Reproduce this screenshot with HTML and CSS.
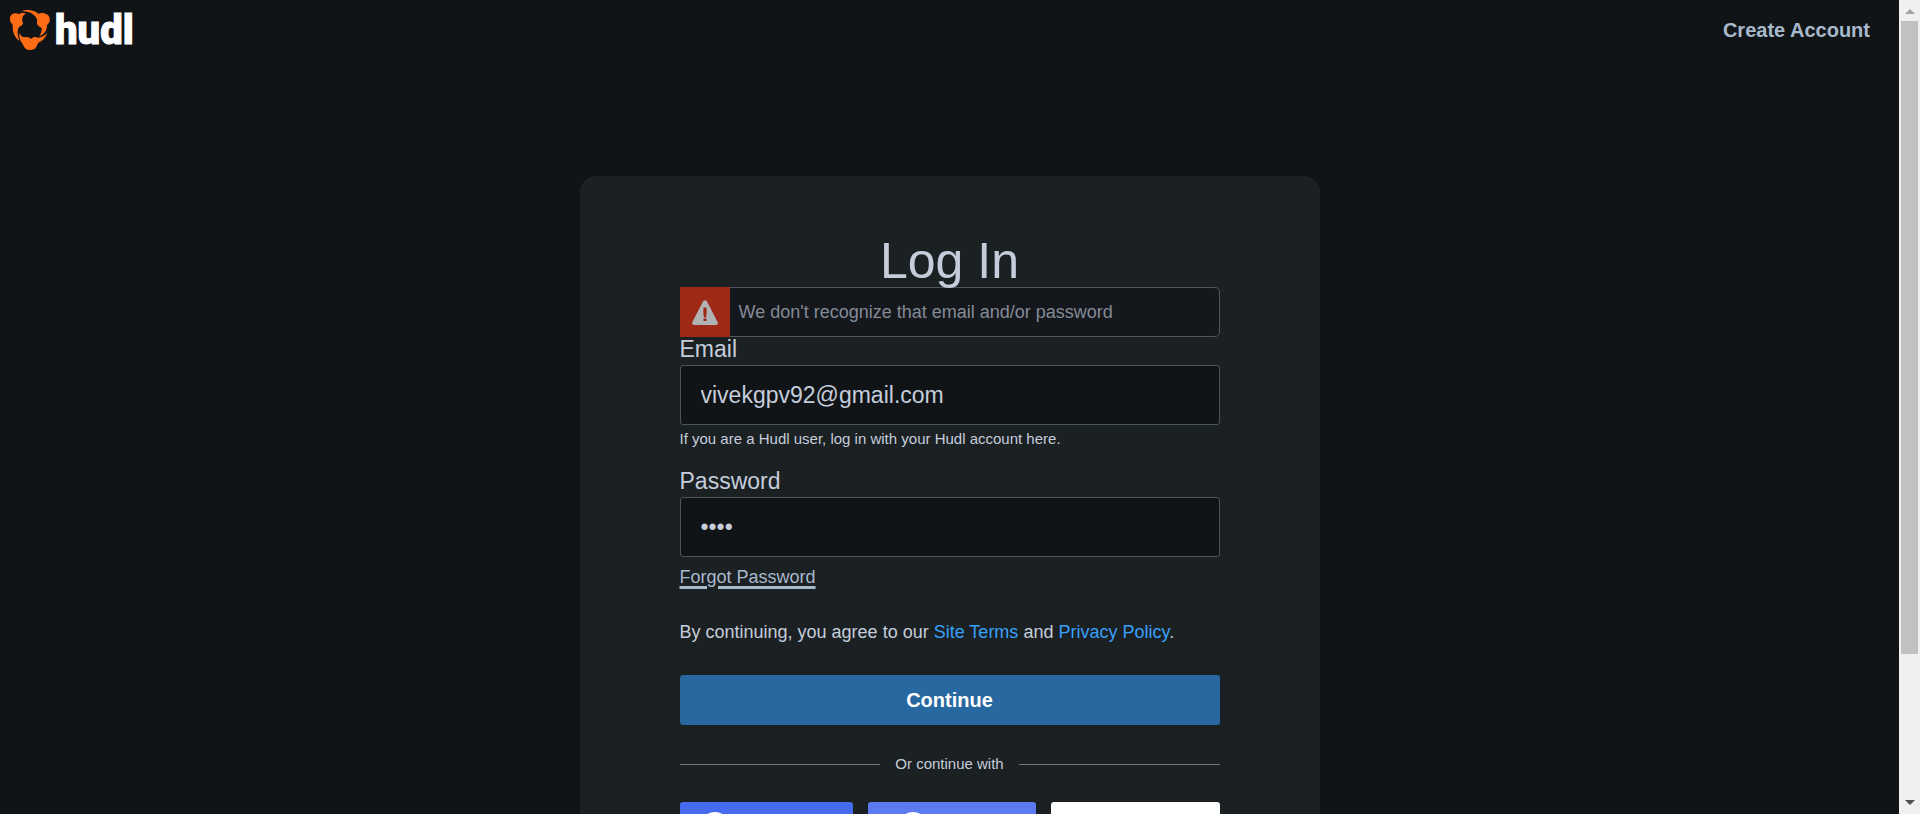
FILE: index.html
```html
<!DOCTYPE html>
<html lang="en">
<head>
<meta charset="utf-8">
<meta name="viewport" content="width=device-width, initial-scale=1">
<title>Log In - Hudl</title>
<link rel="stylesheet" href="styles.css">
</head>
<body>
<div class="page">
  <header class="topbar">
    <a class="logo" href="#" aria-label="hudl">
      <svg class="logo-mark" viewBox="9 9 126 126" aria-hidden="true">
        <path d="M60 23C50 19 44 23 38 24C28 19 12 23 12 38C11 48 17 51 20 56C19 76 25 94 40 104C35 90 33 78 37 66C42 58 51 60 51 50C46 39 49 28 60 23Z"/>
        <path d="M46 16C62 9 84 11 97 23C112 17 130 24 131 38C133 49 126 52 123 58C123 74 114 86 100 91C105 82 108 74 107 66C96 60 90 54 94 45C92 28 72 15 46 16Z"/>
        <path d="M40 80C44 89 50 94 56 94C66 90 72 98 77 98C84 91 90 93 96 95C107 94 116 89 124 80C119 96 108 105 97 110C92 117 92 132 72 132C57 132 54 122 50 114C42 104 38 92 40 80Z"/>
      </svg>
      <span class="wordmark">hudl</span>
    </a>
    <a class="create" href="#">Create Account</a>
  </header>
  <main class="card">
    <h1 class="title">Log In</h1>
    <div class="alert" role="alert">
      <span class="alert-icon">
        <svg width="26" height="25" viewBox="0 0 26 25" aria-hidden="true">
          <path class="alert-shape" d="M11 1.4Q13-1 15 1.4L25.6 22Q26.4 25 24 25H2Q-.4 25 .4 22Z"/>
          <path class="alert-mark" d="M11.4 7.5h3.2v6l-.5 4h-2.2l-.5-4zM11.5 18.6h3V21h-3z"/>
        </svg>
      </span>
      <span class="alert-text">We don't recognize that email and/or password</span>
    </div>
    <form class="form">
      <label class="label" for="email">Email</label>
      <input class="field" id="email" type="email" value="vivekgpv92@gmail.com">
      <p class="hint">If you are a Hudl user, log in with your Hudl account here.</p>
      <label class="label" for="password">Password</label>
      <input class="field" id="password" type="password" value="abcd">
      <a class="forgot" href="#">Forgot Password</a>
      <p class="terms">By continuing, you agree to our <a href="#">Site Terms</a> and <a href="#">Privacy Policy</a>.</p>
      <button class="continue" type="submit">Continue</button>
      <div class="divider">Or continue with</div>
      <div class="social">
        <button class="provider provider-a" type="button" aria-label="Facebook"><span class="disc"></span></button>
        <button class="provider provider-b" type="button" aria-label="Google"><span class="disc"></span></button>
        <button class="provider provider-c" type="button" aria-label="Apple"></button>
      </div>
    </form>
  </main>
</div>
<div class="scrollbar" aria-hidden="true">
  <svg class="arrow arrow-up" viewBox="0 0 10 5"><path d="M0 5L5 0L10 5Z"/></svg>
  <div class="track"><div class="thumb"></div></div>
  <svg class="arrow arrow-down" viewBox="0 0 10 5"><path d="M0 0L5 5L10 0Z"/></svg>
</div>
</body>
</html>
```
FILE: styles.css
```css
* { box-sizing: border-box; }
body {
  margin: 0;
  height: 100vh;
  display: flex;
  overflow: hidden;
  background: #101417;
  color: #c5cddb;
  font-family: "Liberation Sans", Arial, sans-serif;
}
.page { flex: 1; min-width: 0; overflow: hidden; }
.topbar {
  display: flex;
  align-items: center;
  justify-content: space-between;
  height: 60px;
  padding: 0 29px 0 9px;
}
.logo { display: flex; align-items: center; gap: 4px; text-decoration: none; }
.logo-mark { width: 42px; height: 42px; fill: #ff6c16; }
.wordmark {
  padding-top: 2px;
  color: #fff;
  font: 900 40px/42px Roboto, sans-serif;
  -webkit-text-stroke: 1px #fff;
}
.create { color: #a9b9cc; font-size: 20px; font-weight: bold; text-decoration: none; }
.card {
  max-width: 740px;
  margin: 116px auto 60px;
  padding: 60px 100px;
  border-radius: 16px;
  background: #1b2023;
}
.title {
  position: relative;
  z-index: 1;
  margin: 0;
  font-size: 50px;
  line-height: 51px;
  font-weight: normal;
  text-align: center;
}
.alert {
  display: flex;
  align-items: center;
  height: 50px;
  border: 1px solid #50565b;
  border-left: 0;
  border-radius: 5px;
  background: #14171c;
}
.alert-icon {
  flex: none;
  display: flex;
  align-items: center;
  justify-content: center;
  width: 50px;
  height: 50px;
  background: #9e2916;
}
.alert-shape { fill: #b1b4b5; }
.alert-mark { fill: #9e2916; }
.alert-text { padding-left: 9px; color: #858b96; font-size: 18px; }
.form { display: flex; flex-direction: column; }
.label { font-size: 23px; line-height: 24px; margin-bottom: 4px; }
.field {
  width: 100%;
  height: 60px;
  padding: 0 20px;
  border: 1px solid #4b535e;
  border-radius: 3px;
  background: #111417;
  color: #c5cddb;
  font: 23px "Liberation Sans", Arial, sans-serif;
}
.hint { margin: 4px 0 20px; font-size: 15px; line-height: 20px; }
.forgot {
  align-self: flex-start;
  margin-top: 8px;
  color: #a9b9cc;
  font-size: 18px;
  line-height: 24px;
  text-decoration: underline;
  text-decoration-thickness: 3px;
  text-underline-offset: 3px;
}
.terms { margin: 30px 0; font-size: 18px; line-height: 26px; }
.terms a { color: #38a0fa; text-decoration: none; }
.continue {
  height: 50px;
  border: 0;
  border-radius: 3px;
  background: #2768a0;
  color: #fff;
  font: bold 20px "Liberation Sans", Arial, sans-serif;
}
.divider {
  display: flex;
  align-items: center;
  gap: 15px;
  margin: 29px 0 28px;
  font-size: 15px;
  line-height: 20px;
}
.divider::before, .divider::after { content: ""; flex: 1; height: 1px; background: #6f777b; }
.social { display: grid; grid-template-columns: 173fr 168fr 169fr; gap: 15px; }
.provider {
  height: 50px;
  padding: 10px 20px;
  border: 0;
  border-radius: 3px;
}
.provider-a { background: #476bef; }
.provider-b { padding-left: 30px; background: #5c7bf0; }
.provider-c { background: #fff; }
.disc { display: block; width: 30px; height: 30px; border-radius: 50%; background: #fff; }
.scrollbar {
  flex: none;
  display: flex;
  flex-direction: column;
  align-items: center;
  width: 21px;
  padding: 9px 2px;
  background: #f0f0f0;
}
.arrow { flex: none; width: 10px; height: 5px; }
.arrow-up { fill: #a3a3a3; }
.arrow-down { fill: #505050; }
.track { flex: 1; width: 100%; padding: 7px 0; }
.thumb { height: 82%; background: #c1c1c1; }
```
